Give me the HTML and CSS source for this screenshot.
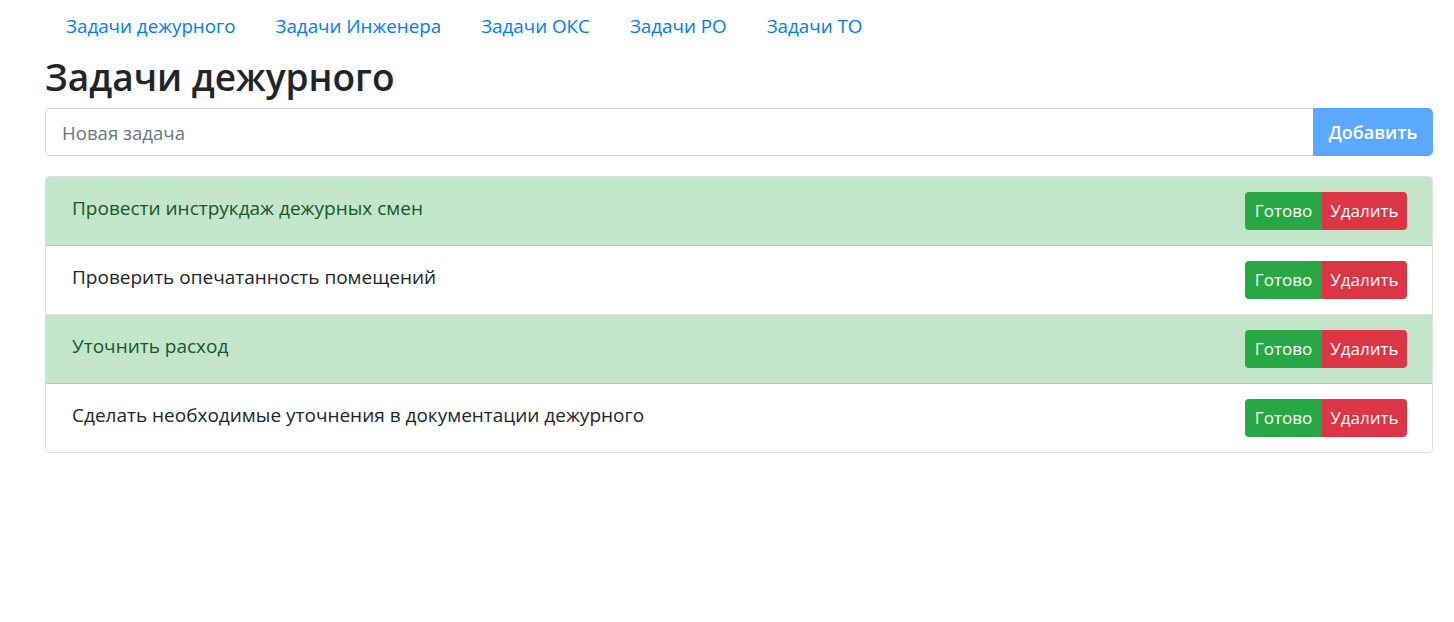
FILE: index.html
```html
<!DOCTYPE html>
<html lang="ru">
<head>
<meta charset="utf-8">
<title>Задачи дежурного</title>
<link rel="stylesheet" href="styles.css">
</head>
<body>
<div class="page">
  <nav class="nav">
    <a class="nav-link" href="#">Задачи дежурного</a>
    <a class="nav-link" href="#">Задачи Инженера</a>
    <a class="nav-link" href="#">Задачи ОКС</a>
    <a class="nav-link" href="#">Задачи РО</a>
    <a class="nav-link" href="#">Задачи ТО</a>
  </nav>
  <h2 class="title">Задачи дежурного</h2>
  <div class="input-group">
    <input class="task-input" type="text" placeholder="Новая задача">
    <button class="btn-add" type="button">Добавить</button>
  </div>
  <ul class="list">
    <li class="item item-success">
      <span class="item-text">Провести инструкдаж дежурных смен</span>
      <span class="btn-group"><button class="btn btn-done">Готово</button><button class="btn btn-del">Удалить</button></span>
    </li>
    <li class="item">
      <span class="item-text">Проверить опечатанность помещений</span>
      <span class="btn-group"><button class="btn btn-done">Готово</button><button class="btn btn-del">Удалить</button></span>
    </li>
    <li class="item item-success">
      <span class="item-text">Уточнить расход</span>
      <span class="btn-group"><button class="btn btn-done">Готово</button><button class="btn btn-del">Удалить</button></span>
    </li>
    <li class="item">
      <span class="item-text">Сделать необходимые уточнения в документации дежурного</span>
      <span class="btn-group"><button class="btn btn-done">Готово</button><button class="btn btn-del">Удалить</button></span>
    </li>
  </ul>
</div>
</body>
</html>
```
FILE: styles.css
```css
* { box-sizing: border-box; }
html, body { margin: 0; padding: 0; background: #fff; }
body {
  font-family: "Segoe UI", "Open Sans", "Noto Sans", sans-serif;
  color: #212529;
  font-size: 16px;
  line-height: 1.5;
}
.page {
  padding: 6px 21px 0 45px;
}
.nav {
  display: flex;
  padding-left: 5px;
  height: 40px;
}
.nav-link {
  display: block;
  padding: 8px 16px;
  color: #007bff;
  text-decoration: none;
  margin-right: 8px;
  font-size: 18.8px;
  line-height: 24px;
}
.title {
  margin: 12px 0 12px 0;
  font-size: 37px;
  font-weight: 600;
  line-height: 38px;
  color: #212529;
}
.input-group {
  display: flex;
  height: 48px;
}
.task-input {
  flex: 1;
  height: 48px;
  border: 1px solid #ced4da;
  border-right: none;
  border-radius: 5px 0 0 5px;
  padding: 8px 16px;
  font-family: inherit;
  font-size: 18.6px;
  color: #495057;
  outline: none;
}
.task-input::placeholder { color: #6c757d; }
.btn-add {
  width: 120px;
  height: 48px;
  border: 1px solid #5aa9ff;
  background: #5aa9ff;
  color: #fff;
  font-family: inherit;
  font-size: 18px;
  font-weight: 600;
  border-radius: 0 5px 5px 0;
  padding: 0 8px;
}
.list {
  list-style: none;
  margin: 20px 0 0 0;
  padding: 0;
  border: 1px solid rgba(0,0,0,.125);
  border-radius: 4px;
  overflow: hidden;
}
.item {
  display: flex;
  align-items: center;
  justify-content: space-between;
  height: 69px;
  padding: 0 25px 0 26px;
  border-bottom: 1px solid rgba(0,0,0,.125);
}
.item:last-child { border-bottom: none; height: 68px; }
.item-success {
  background: #c3e6cb;
  color: #155724;
}
.item-text {
  font-size: 19px;
  margin-top: -5px;
}
.btn-group { display: flex; }
.btn {
  height: 38px;
  border: none;
  color: #fff;
  font-family: inherit;
  font-size: 17px;
  padding: 0;
  line-height: 38px;
}
.btn-done {
  background: #28a745;
  border-radius: 4px 0 0 4px;
  width: 77px;
}
.btn-del {
  background: #dc3545;
  border-radius: 0 4px 4px 0;
  width: 85px;
}
```
